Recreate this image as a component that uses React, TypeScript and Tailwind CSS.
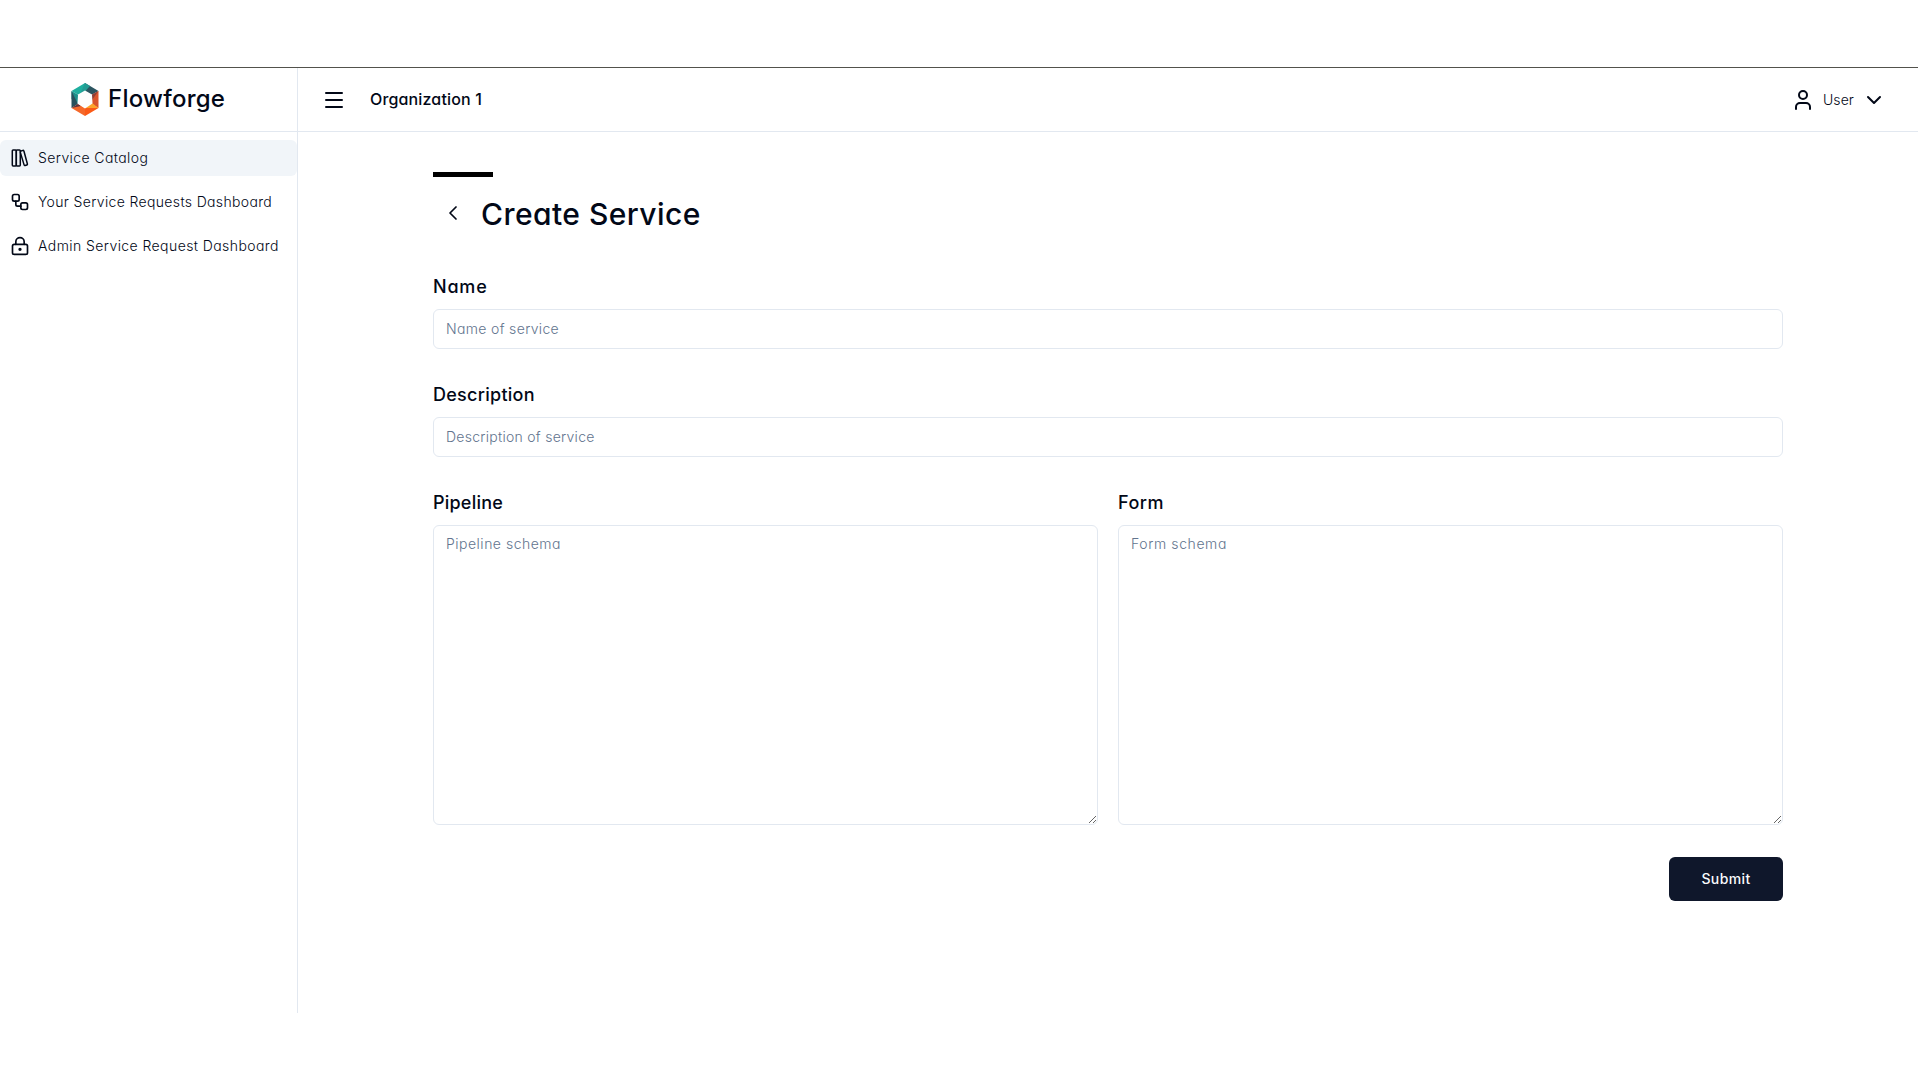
import React from "react";
import { ChevronDown, ChevronLeft, LockKeyhole, Menu, User, Workflow } from "lucide-react";

function Logo() {
  return (
    <svg width="28" height="33" viewBox="0 0 28 33" className="shrink-0">
      <polygon points="14,0 0.5,8 7.5,12 14,8.5" fill="#1fae9f" />
      <polygon points="14,0 27.5,8 20.5,12 14,8.5" fill="#2b5560" />
      <polygon points="14,0 19,3 14,8.5 9,11" fill="#239c93" />
      <polygon points="0.5,8 7.5,12 7,21 0.5,16" fill="#1c8f8b" />
      <polygon points="0.5,8 7,21 0.5,25" fill="#28505c" />
      <polygon points="27.5,8 20.5,12 21,21 27.5,25" fill="#d9542c" />
      <polygon points="27.5,8 20.5,12 21,17" fill="#8d4038" />
      <polygon points="0.5,25 7,21 14,25 14,33" fill="#f4682a" />
      <polygon points="0.5,25 7,21 10,23" fill="#5d3340" />
      <polygon points="27.5,25 21,21 14,25 14,33" fill="#fb5a17" />
      <polygon points="21,20 27.5,25 14,25" fill="#fda32b" />
      <polygon points="14,7.5 21,11.5 21.5,20.5 14,25.5 6.5,20.5 7,11.5" fill="#fdfdfd" />
    </svg>
  );
}

function BooksIcon() {
  return (
    <svg
      width="20"
      height="20"
      viewBox="0 0 20 20"
      fill="none"
      stroke="currentColor"
      strokeWidth="1.5"
      strokeLinejoin="round"
      strokeLinecap="round"
    >
      <rect x="2.3" y="1.9" width="4" height="16" rx="0.8" />
      <rect x="6.3" y="1.9" width="4" height="16" rx="0.8" />
      <path d="M10.4 3.2 12.9 2.4a.8.8 0 0 1 1 .6l3.5 13a.8.8 0 0 1-.6 1l-1.7.5a.8.8 0 0 1-1-.6L10.4 4.6" />
    </svg>
  );
}

const items = [
  { label: "Service Catalog", icon: <BooksIcon />, active: true, tracking: "tracking-[0.4px]" },
  { label: "Your Service Requests Dashboard", icon: <Workflow size={20} />, active: false, tracking: "tracking-[0.35px]" },
  { label: "Admin Service Request Dashboard", icon: <LockKeyhole size={20} />, active: false, tracking: "tracking-[0.42px]" },
];

const label = "block h-7 text-[18px] leading-7 font-medium";
const field =
  "block w-full rounded-md border border-slate-200 bg-white px-3 text-sm leading-5 font-[350] placeholder:text-slate-500 outline-none";

export default function App() {
  return (
    <div className="h-[1079px] bg-white pt-[67px] font-['Inter',sans-serif] text-[#020817] [font-feature-settings:'cv11']">
      <div className="flex h-[946px] border-t border-[#52524c]">
        <aside className="w-[298px] shrink-0 border-r border-slate-200">
          <div className="flex h-16 items-center gap-[9px] border-b border-slate-200 pb-px pl-[71px]">
            <Logo />
            <span className="text-[24px] leading-8 font-medium tracking-[0.25px]">Flowforge</span>
          </div>
          <nav className="flex flex-col gap-2 pt-2">
            {items.map((i) => (
              <a
                key={i.label}
                className={
                  "flex h-9 items-center gap-2 rounded-md pl-[10px] text-sm font-[350] whitespace-nowrap " +
                  (i.active ? "bg-slate-100" : "")
                }
              >
                <span className="shrink-0">{i.icon}</span>
                <span className={i.tracking}>{i.label}</span>
              </a>
            ))}
          </nav>
        </aside>
        <div className="flex min-w-0 flex-1 flex-col">
          <header className="flex h-16 items-center border-b border-slate-200 pr-8 pl-6">
            <Menu size={24} />
            <span className="ml-6 pb-px text-base font-medium tracking-[0.15px]">Organization 1</span>
            <div className="ml-auto flex items-center">
              <User size={24} />
              <span className="ml-2 text-sm font-[350] tracking-[0.1px]">User</span>
              <ChevronDown size={24} className="ml-2" />
            </div>
          </header>
          <main className="px-[135px] pt-10">
            <div className="h-[5px] w-[60px] bg-black" />
            <div className="mt-4 flex h-10 items-center">
              <ChevronLeft size={24} strokeWidth={1.75} className="ml-2" />
              <h1 className="ml-4 pt-[2px] text-[30px] leading-9 font-medium tracking-[0.45px]">Create Service</h1>
            </div>
            <form className="mt-10">
              <label className={label + " tracking-[0.8px]"}>Name</label>
              <input className={field + " mt-2 h-10 pb-[2px] tracking-[0.34px]"} placeholder="Name of service" />
              <label className={label + " mt-8 tracking-[0.27px]"}>Description</label>
              <input className={field + " mt-2 h-10 pb-[2px] tracking-[0.27px]"} placeholder="Description of service" />
              <div className="mt-8 grid grid-cols-2 gap-5">
                <div>
                  <label className={label + " tracking-[0.22px]"}>Pipeline</label>
                  <textarea className={field + " mt-2 h-[300px] py-2 tracking-[0.5px]"} placeholder="Pipeline schema" />
                </div>
                <div>
                  <label className={label + " tracking-[0.5px]"}>Form</label>
                  <textarea className={field + " mt-2 h-[300px] py-2 tracking-[0.6px]"} placeholder="Form schema" />
                </div>
              </div>
              <div className="mt-8 flex justify-end">
                <button
                  type="button"
                  className="h-11 w-[114px] rounded-md bg-slate-900 text-sm font-medium tracking-[0.4px] text-slate-50"
                >
                  Submit
                </button>
              </div>
            </form>
          </main>
        </div>
      </div>
    </div>
  );
}
